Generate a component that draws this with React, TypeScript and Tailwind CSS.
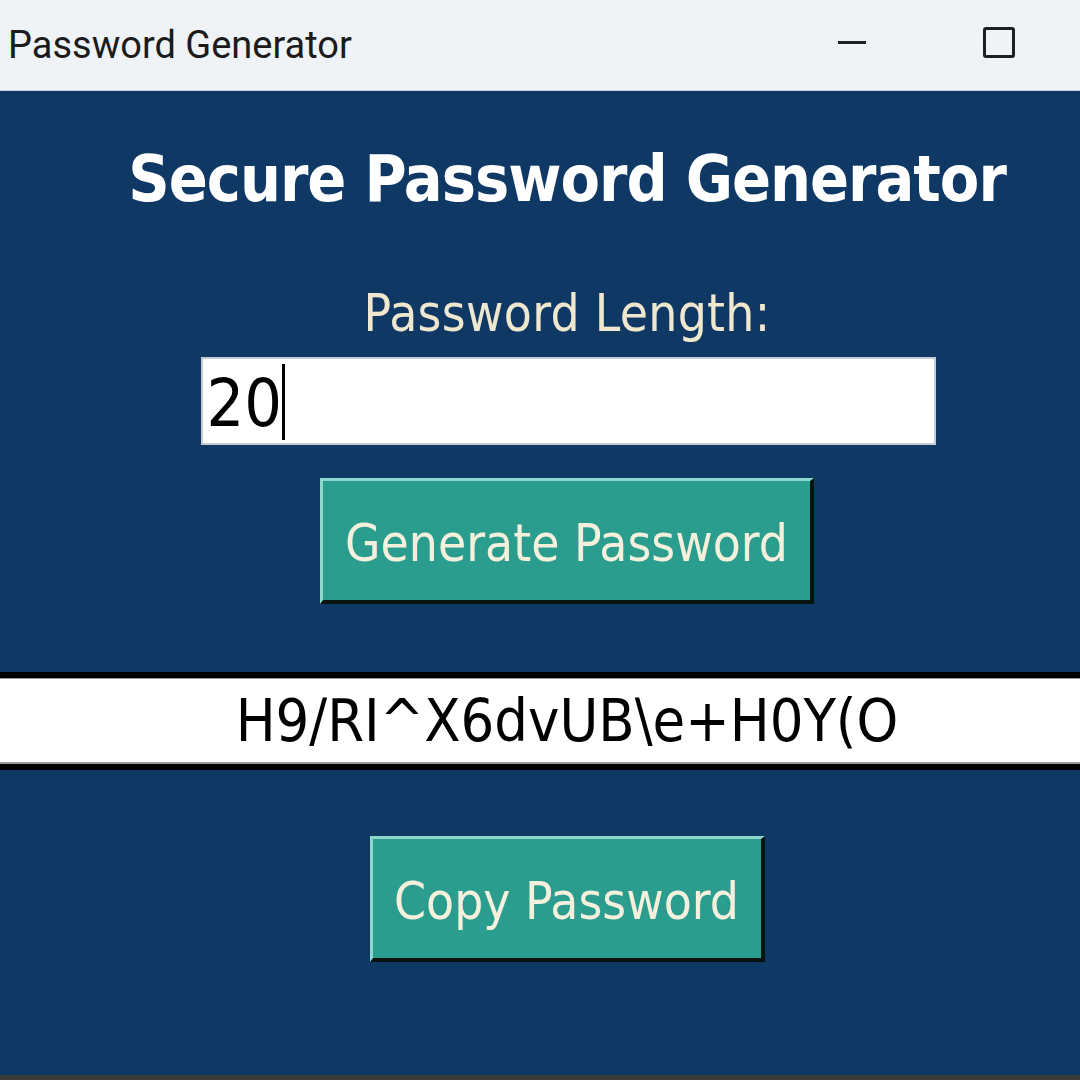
import React from "react";

const tk = { fontFamily: '"DejaVu Sans Condensed", "DejaVu Sans", sans-serif' };

export default function App() {
  return (
    <div className="w-[1080px] h-[1080px] overflow-hidden bg-[#0f3964] flex flex-col">
      <div className="h-[91px] shrink-0 bg-[#eff3f5] border-b border-[#c9d3da] flex items-center">
        <span
          className="pl-[8px] text-[38px] leading-none text-[#1b1b1b]"
          style={{ fontFamily: 'Roboto, "Liberation Sans", sans-serif' }}
        >
          Password Generator
        </span>
        <div className="ml-auto flex items-center mr-[65px] mb-[6px]">
          <div className="w-[28px] h-[3px] bg-[#1f1f1f]" />
          <div className="ml-[117px] w-[32px] h-[31px] border-[3px] border-[#1f1f1f] rounded-[3px]" />
        </div>
      </div>
      <div className="flex-1 overflow-hidden">
        <div className="w-[1134px] flex flex-col items-center" style={tk}>
          <h1 className="mt-[56px] text-[64px] leading-none font-bold tracking-[-1px] text-white">
            Secure Password Generator
          </h1>
          <div className="mt-[77px] text-[51px] leading-none tracking-[0.3px] text-[#efe8cf]">Password Length:</div>
          <div className="mt-[18px] ml-[2px] w-[735px] h-[88px] bg-white border-2 border-[#c5ccd3] flex items-center pl-[4px] pt-[5px]">
            <span className="text-[66px] leading-none text-black">20</span>
            <span className="w-[3px] h-[76px] bg-black -mt-[4px]" />
          </div>
          <button className="mt-[33px] w-[494px] h-[126px] bg-[#2a9d8f] border-t-[3px] border-l-[3px] border-[#8dd8cc] border-b-[4px] border-r-[4px] border-b-[#06130f] border-r-[#06130f] flex items-center justify-center pt-[6px] text-[51px] leading-none text-[#f4f0dc]">
            Generate Password
          </button>
          <div className="mt-[68px] w-full h-[98px] border-t-[6px] border-b-[6px] border-black bg-white flex flex-col">
            <div className="h-[1px] bg-[#9a9a9a]" />
            <div className="flex-1 flex items-center justify-center text-[59px] leading-none text-black">
              {"H9/RI^X6dvUB\\e+H0Y(O"}
            </div>
            <div className="h-[2px] bg-[#9a9a9a]" />
          </div>
          <button className="mt-[66px] w-[395px] h-[126px] bg-[#2a9d8f] border-t-[3px] border-l-[3px] border-[#8dd8cc] border-b-[4px] border-r-[4px] border-b-[#06130f] border-r-[#06130f] flex items-center justify-center pt-[6px] text-[51px] leading-none text-[#f4f0dc]">
            Copy Password
          </button>
        </div>
      </div>
      <div className="h-[5px] shrink-0 bg-[#3b3b3b]" />
    </div>
  );
}
